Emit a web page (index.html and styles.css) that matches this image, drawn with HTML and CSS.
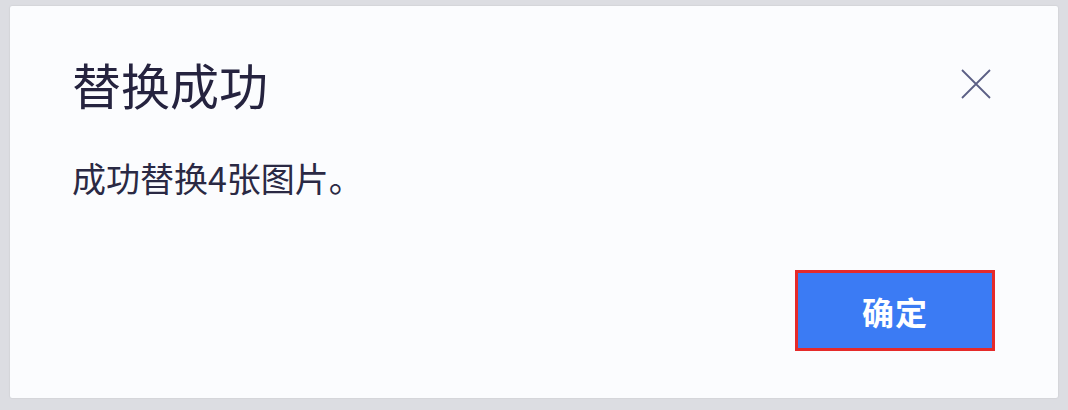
FILE: index.html
```html
<!DOCTYPE html>
<html lang="zh">
<head>
<meta charset="utf-8">
<link rel="stylesheet" href="styles.css">
</head>
<body>
<div class="page">
  <div class="dialog">
    <div class="header">
      <h1 class="title">替换成功</h1>
      <button class="close" aria-label="关闭">
        <svg width="32" height="32" viewBox="0 0 32 32"><path d="M2 2 L30 30 M30 2 L2 30" stroke="#5b5f85" stroke-width="1.8" fill="none"/></svg>
      </button>
    </div>
    <p class="message">成功替换4张图片。</p>
    <div class="footer">
      <button class="ok">确定</button>
    </div>
  </div>
</div>
</body>
</html>
```
FILE: styles.css
```css
html, body {
  margin: 0;
  padding: 0;
}
body {
  background: #dcdde2;
  width: 1068px;
  height: 410px;
  overflow: hidden;
  font-family: "Noto Sans CJK SC", "Noto Sans", sans-serif;
}
.page {
  padding: 6px 10px 0 10px;
}
.dialog {
  box-sizing: border-box;
  width: 1048px;
  height: 392px;
  background: #fbfcfe;
  border-radius: 2px;
  box-shadow: 0 0 2px rgba(0,0,0,0.12);
  padding: 48px 66px 0 62px;
  display: flex;
  flex-direction: column;
}
.header {
  display: flex;
  justify-content: space-between;
  align-items: center;
}
.title {
  margin: 0;
  font-size: 49px;
  line-height: 60px;
  font-weight: 400;
  color: #25233f;
}
.close {
  border: 0;
  background: none;
  padding: 0;
  width: 32px;
  height: 32px;
}
.close svg { display: block; }
.message {
  margin: 42px 0 0 0;
  font-size: 34px;
  line-height: 44px;
  color: #2a2944;
}
.footer {
  display: flex;
  justify-content: flex-end;
  margin-top: 70px;
  margin-right: -3px;
}
.ok {
  box-sizing: border-box;
  width: 200px;
  height: 81px;
  background: #3b7bf4;
  border: 3px solid #e52a2a;
  color: #ffffff;
  font-family: "Noto Sans CJK SC", sans-serif;
  font-size: 32px;
  font-weight: 700;
  letter-spacing: 1px;
  padding: 0;
}
```
